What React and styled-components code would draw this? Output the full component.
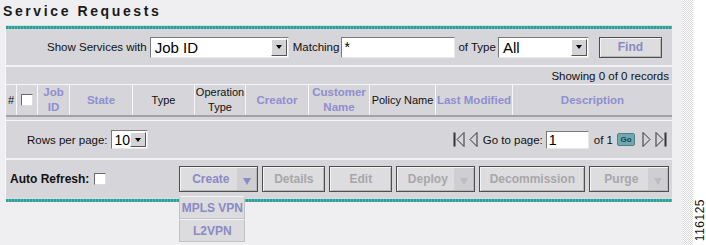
import React from "react";
import styled, { createGlobalStyle } from "styled-components";

const Global = createGlobalStyle`
  html, body { margin: 0; padding: 0; background: #efeef1; }
  body { font-family: "Liberation Sans", Arial, sans-serif; font-size: 12px; color: #000; }
`;

const Page = styled.div`
  display: flex;
  width: 706px;
  height: 245px;
  overflow: hidden;
`;

const Main = styled.div`
  width: 683px;
  flex-shrink: 0;
  background: #efeef1;
`;

const Strip = styled.div`
  width: 10px;
  flex-shrink: 0;
  background-color: #f4f4f4;
  background-image: repeating-conic-gradient(#d8d8d8 0% 25%, #ffffff 0% 50%);
  background-size: 2px 2px;
`;

const FigCol = styled.div`
  flex: 1;
  background: #fff;
  display: flex;
  align-items: flex-end;
  justify-content: center;
  padding-bottom: 4px;
`;

const FigId = styled.span`
  writing-mode: vertical-rl;
  transform: rotate(180deg);
  font-family: "Liberation Sans", Arial, sans-serif;
  font-size: 12px;
  letter-spacing: 0.5px;
  color: #111;
`;

const Title = styled.div`
  font-family: "Liberation Sans", Arial, sans-serif;
  font-weight: bold;
  font-size: 14px;
  letter-spacing: 2.6px;
  color: #1a1a1a;
  padding: 3px 0 0 3px;
  height: 25px;
  box-sizing: border-box;
  white-space: nowrap;
`;

const teal = `repeating-linear-gradient(90deg, #2f9c98 0 2px, #5bb7b2 2px 3px)`;

const TealLine = styled.div`
  height: 3px;
  margin-left: 6px;
  width: 666px;
  background: ${teal};
  border-top: 1px solid #c9e4e2;
`;

const Panel = styled.div`
  margin-left: 5px;
  width: 667px;
  background: #d6d5d9;
  border-left: 1px solid #f7f7f7;
  box-sizing: border-box;
`;

const SearchRow = styled.div`
  height: 38px;
  display: flex;
  align-items: center;
  padding-left: 41px;
  border-bottom: 2px solid #f2f2f4;
  box-sizing: border-box;
`;

const Label = styled.span`
  font-size: 11.5px;
  color: #111;
  white-space: nowrap;
  flex-shrink: 0;
  margin-left: ${(p) => p.$ml || 0}px;
  margin-right: ${(p) => p.$mr || 0}px;
`;

const SelectBox = styled.div`
  flex-shrink: 0;
  width: ${(p) => p.$w}px;
  height: ${(p) => p.$h || 21}px;
  background: #fff;
  border-top: 1px solid #7a7a7a;
  border-left: 1px solid #7a7a7a;
  border-right: 1px solid #e8e8e8;
  border-bottom: 1px solid #e8e8e8;
  box-sizing: border-box;
  display: flex;
  align-items: center;
  justify-content: space-between;
  font-size: ${(p) => p.$fs || 15}px;
  padding-left: ${(p) => p.$pl || 4}px;
`;

const ArrowBtn = styled.div`
  width: 16px;
  height: calc(100% - 2px);
  margin-right: 1px;
  background: #d4d3d6;
  border-top: 1px solid #fff;
  border-left: 1px solid #fff;
  border-right: 1px solid #555;
  border-bottom: 1px solid #555;
  box-sizing: border-box;
  display: flex;
  align-items: center;
  justify-content: center;
  &::after {
    content: "";
    border-left: 3.5px solid transparent;
    border-right: 3.5px solid transparent;
    border-top: 4px solid #000;
  }
`;

const TextInput = styled.div`
  flex-shrink: 0;
  width: ${(p) => p.$w}px;
  height: ${(p) => p.$h || 21}px;
  background: #fff;
  border-top: 1px solid #7a7a7a;
  border-left: 1px solid #7a7a7a;
  border-right: 1px solid #e8e8e8;
  border-bottom: 1px solid #e8e8e8;
  box-sizing: border-box;
  font-size: ${(p) => p.$fs || 14}px;
  padding-left: 2px;
  display: flex;
  align-items: center;
`;

const Btn = styled.div`
  flex-shrink: 0;
  width: ${(p) => p.$w}px;
  height: ${(p) => p.$h || 26}px;
  background: #dddcdf;
  border: 1px solid #4e4e4e;
  box-shadow: inset 1px 1px 0 #f4f4f4, inset -1px -1px 0 #b8b8b8;
  box-sizing: border-box;
  display: flex;
  align-items: center;
  font-weight: bold;
  font-size: 12px;
  color: ${(p) => (p.$active ? "#8a8ac4" : "#a7a7aa")};
  margin-left: ${(p) => p.$ml || 0}px;
`;

const BtnText = styled.span`
  flex: 1;
  text-align: center;
  padding-left: ${(p) => (p.$drop ? 4 : 0)}px;
`;

const BtnDrop = styled.div`
  width: 19px;
  align-self: stretch;
  margin: 1px 1px 1px 0;
  background: #cfced2;
  display: flex;
  align-items: center;
  justify-content: center;
  padding-top: 4px;
  box-sizing: border-box;
  &::after {
    content: "";
    border-left: 4px solid transparent;
    border-right: 4px solid transparent;
    border-top: 7px solid ${(p) => (p.$active ? "#8a8ac4" : "#bdbdc0")};
  }
`;

const RecordsRow = styled.div`
  height: 17px;
  display: flex;
  align-items: center;
  justify-content: flex-end;
  padding-right: 3px;
  font-size: 11.5px;
  color: #111;
  border-bottom: 1px solid #f7f7f7;
`;

const HeaderRow = styled.div`
  display: grid;
  grid-template-columns: 11px 21px 32px 63px 62px 51px 63px 61px 66px 77px 1fr;
  height: 30px;
  border-bottom: 2px solid #a3a2a6;
`;

const HCell = styled.div`
  border-right: 1px solid #f7f7f7;
  display: flex;
  align-items: center;
  justify-content: center;
  text-align: center;
  white-space: nowrap;
  font-size: ${(p) => (p.$link ? 11.5 : 11)}px;
  line-height: 15px;
  font-weight: ${(p) => (p.$link ? "bold" : "normal")};
  color: ${(p) => (p.$link ? "#8e8ed0" : "#111")};
  &:last-child { border-right: none; }
`;

const Check = styled.div`
  flex-shrink: 0;
  width: 12px;
  height: 12px;
  background: #fff;
  border-top: 1px solid #6a6a6a;
  border-left: 1px solid #6a6a6a;
  border-right: 1px solid #dcdcdc;
  border-bottom: 1px solid #dcdcdc;
  box-sizing: border-box;
`;

const Gap = styled.div`
  height: 3px;
  border-bottom: 1px solid #f7f7f7;
`;

const PagerRow = styled.div`
  height: 37px;
  display: flex;
  align-items: center;
  padding-left: 21px;
  padding-right: 4px;
  border-bottom: 2px solid #f2f2f4;
`;

const Pager = styled.div`
  margin-left: auto;
  display: flex;
  align-items: center;
`;

const GoBtn = styled.div`
  width: 18px;
  height: 13px;
  background: #6fa9ad;
  border: 1px solid #4d8186;
  border-radius: 2px;
  box-sizing: border-box;
  font-size: 8px;
  font-weight: bold;
  color: #1e3d5e;
  display: flex;
  align-items: center;
  justify-content: center;
  margin: 0 5px 0 4px;
`;

const ActionRow = styled.div`
  height: 38px;
  display: flex;
  align-items: center;
`;

const AutoLabel = styled.span`
  font-weight: bold;
  font-size: 12px;
  color: #111;
  margin-left: 4px;
  margin-right: 5px;
  white-space: nowrap;
`;

const CreateWrap = styled.div`
  position: relative;
  margin-left: 73px;
`;

const Menu = styled.div`
  position: absolute;
  top: 30px;
  left: 0;
  width: 66px;
  z-index: 2;
`;

const MenuItem = styled.div`
  height: 23px;
  background: #dcdbde;
  border: 1px solid #c2c1c5;
  border-top-color: #f4f4f4;
  box-sizing: border-box;
  display: flex;
  align-items: center;
  justify-content: center;
  font-weight: bold;
  font-size: 12px;
  color: #8a8ac4;
`;

const NavSvg = styled.svg`
  display: block;
  margin: 0 1px;
  flex-shrink: 0;
`;

const NavIcon = ({ kind }) => {
  const tri = "M10 1.5 L3 8.5 L10 15.5 Z";
  const triR = "M2 1.5 L9 8.5 L2 15.5 Z";
  return (
    <NavSvg width="12" height="17" viewBox="0 0 12 17">
      {kind === "first" && (
        <>
          <path d="M1.5 1.5 V15.5" stroke="#333" strokeWidth="2" />
          <path d={tri} transform="translate(1 0)" fill="none" stroke="#333" strokeWidth="1" />
        </>
      )}
      {kind === "prev" && <path d={tri} fill="none" stroke="#333" strokeWidth="1" />}
      {kind === "next" && <path d={triR} fill="none" stroke="#333" strokeWidth="1" />}
      {kind === "last" && (
        <>
          <path d={triR} transform="translate(-1 0)" fill="none" stroke="#333" strokeWidth="1" />
          <path d="M10.5 1.5 V15.5" stroke="#333" strokeWidth="2" />
        </>
      )}
    </NavSvg>
  );
};

export default function App() {
  return (
    <Page>
      <Global />
      <Main>
        <Title>Service Requests</Title>
        <TealLine />
        <Panel>
          <SearchRow>
            <Label $mr={3}>Show Services with</Label>
            <SelectBox $w={139}>
              Job ID
              <ArrowBtn />
            </SelectBox>
            <Label $ml={4} $mr={2}>Matching</Label>
            <TextInput $w={114}>*</TextInput>
            <Label $ml={3} $mr={2}>of Type</Label>
            <SelectBox $w={91}>
              All
              <ArrowBtn />
            </SelectBox>
            <Btn $w={63} $h={21} $active $ml={10}>
              <BtnText>Find</BtnText>
            </Btn>
          </SearchRow>
          <RecordsRow>Showing 0 of 0 records</RecordsRow>
          <HeaderRow>
            <HCell>#</HCell>
            <HCell>
              <Check />
            </HCell>
            <HCell $link>
              Job
              <br />
              ID
            </HCell>
            <HCell $link>State</HCell>
            <HCell>Type</HCell>
            <HCell>
              Operation
              <br />
              Type
            </HCell>
            <HCell $link>Creator</HCell>
            <HCell $link>
              Customer
              <br />
              Name
            </HCell>
            <HCell>Policy Name</HCell>
            <HCell $link>Last Modified</HCell>
            <HCell $link>Description</HCell>
          </HeaderRow>
          <Gap />
          <PagerRow>
            <Label $mr={3}>Rows per page:</Label>
            <SelectBox $w={37} $h={19} $fs={14} $pl={3}>
              10
              <ArrowBtn />
            </SelectBox>
            <Pager>
              <NavIcon kind="first" />
              <NavIcon kind="prev" />
              <Label $ml={3} $mr={3}>Go to page:</Label>
              <TextInput $w={43} $h={18} $fs={14}>1</TextInput>
              <Label $ml={5}>of 1</Label>
              <GoBtn>Go</GoBtn>
              <NavIcon kind="next" />
              <NavIcon kind="last" />
            </Pager>
          </PagerRow>
          <ActionRow>
            <AutoLabel>Auto Refresh:</AutoLabel>
            <Check />
            <CreateWrap>
              <Btn $w={79} $active>
                <BtnText $drop>Create</BtnText>
                <BtnDrop $active />
              </Btn>
              <Menu>
                <MenuItem>MPLS VPN</MenuItem>
                <MenuItem>L2VPN</MenuItem>
              </Menu>
            </CreateWrap>
            <Btn $w={63} $ml={4}>
              <BtnText>Details</BtnText>
            </Btn>
            <Btn $w={63} $ml={4}>
              <BtnText>Edit</BtnText>
            </Btn>
            <Btn $w={79} $ml={4}>
              <BtnText $drop>Deploy</BtnText>
              <BtnDrop />
            </Btn>
            <Btn $w={106} $ml={4}>
              <BtnText>Decommission</BtnText>
            </Btn>
            <Btn $w={80} $ml={4}>
              <BtnText $drop>Purge</BtnText>
              <BtnDrop />
            </Btn>
          </ActionRow>
        </Panel>
        <TealLine />
      </Main>
      <Strip />
      <FigCol>
        <FigId>116125</FigId>
      </FigCol>
    </Page>
  );
}
